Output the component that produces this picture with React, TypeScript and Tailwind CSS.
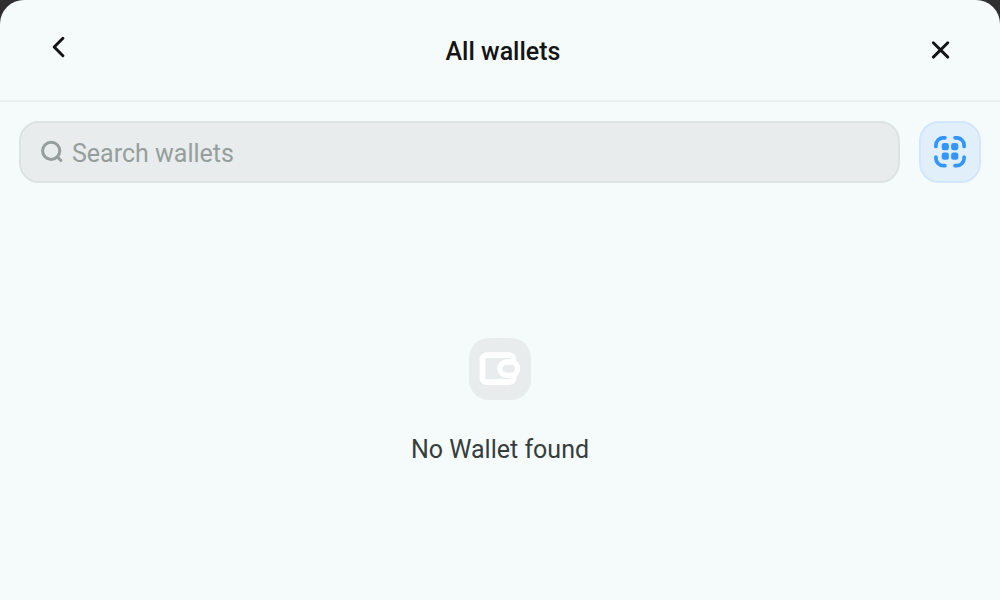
import React from "react";

function BackIcon() {
  return (
    <svg viewBox="0 0 24 24" className="size-6" fill="none" stroke="currentColor" strokeWidth="3" strokeLinecap="round" strokeLinejoin="round" aria-hidden="true">
      <path d="M16.9 3.3 8.2 12l8.7 8.7" />
    </svg>
  );
}

function CloseIcon() {
  return (
    <svg viewBox="0 0 24 24" className="size-6" fill="none" stroke="currentColor" strokeWidth="2.9" strokeLinecap="round" aria-hidden="true">
      <path d="M5.3 4.7 19.8 19.1M19.8 4.7 5.3 19.1" />
    </svg>
  );
}

function SearchIcon() {
  return (
    <svg viewBox="0 0 24 24" className="size-6 shrink-0" fill="none" stroke="currentColor" strokeWidth="3" strokeLinecap="round" aria-hidden="true">
      <circle cx="11.2" cy="10.8" r="8.6" />
      <path d="m17.4 17 3.5 3.5" />
    </svg>
  );
}

function ScanIcon() {
  return (
    <svg viewBox="0 0 32 32" className="size-8" aria-hidden="true">
      <g fill="none" stroke="currentColor" strokeWidth="3.7" strokeLinecap="round">
        <path d="M1.9 10.4V9.2a7.4 7.4 0 0 1 7.4-7.4h1.6" />
        <path d="M21.1 1.8h1.6a7.4 7.4 0 0 1 7.4 7.4v1.2" />
        <path d="M30.1 21.2v1.1a7.4 7.4 0 0 1-7.4 7.4h-1.6" />
        <path d="M10.9 29.7H9.3a7.4 7.4 0 0 1-7.4-7.4v-1.1" />
      </g>
      <g fill="currentColor">
        <rect x="7.7" y="7.1" width="7.2" height="7.2" rx="2.4" />
        <rect x="17.1" y="7.1" width="7.2" height="7.2" rx="2.4" />
        <rect x="7.7" y="16.6" width="7.2" height="7.2" rx="2.4" />
        <rect x="17.1" y="16.6" width="7.2" height="7.2" rx="2.4" />
      </g>
    </svg>
  );
}

function WalletIcon() {
  return (
    <svg viewBox="0 0 42 36" className="h-9 w-[42px]" fill="none" stroke="white" aria-hidden="true">
      <rect x="3.5" y="4.1" width="31" height="27" rx="4.2" strokeWidth="5.8" />
      <rect x="21" y="11" width="17.6" height="13.4" rx="6.7" fill="#e9eced" strokeWidth="5.4" />
    </svg>
  );
}

export default function App() {
  return (
    <div className="min-h-screen bg-[#302f30] font-[Roboto,sans-serif]">
      <main className="flex min-h-screen flex-col rounded-t-3xl bg-[#f5fbfb] text-[#141414]">
        <header className="grid h-[102px] grid-cols-[1fr_auto_1fr] items-center border-b-2 border-[#e9eeee] px-10">
          <button type="button" aria-label="Back" className="mb-1.5 justify-self-start p-1.5">
            <BackIcon />
          </button>
          <h1 className="pt-1 pl-1.5 text-[25px] leading-8 font-medium">All wallets</h1>
          <button type="button" aria-label="Close" className="justify-self-end p-2">
            <CloseIcon />
          </button>
        </header>
        <div className="flex gap-[19px] px-[19px] pt-[19px]">
          <label className="flex h-[62px] flex-1 items-center gap-2 rounded-[20px] border-2 border-[#dde2e2] bg-[#e9eced] px-[19px] text-[#949e9c]">
            <SearchIcon />
            <input
              type="text"
              aria-label="Search wallets"
              placeholder="Search wallets"
              className="min-w-0 flex-1 bg-transparent pt-1 text-[25px] leading-8 text-[#141414] outline-none placeholder:text-[#949e9c]"
            />
          </label>
          <button type="button" aria-label="Scan QR code" className="flex size-[62px] items-center justify-center rounded-[20px] border-2 border-[#d2e7fb] bg-[#e1effb] text-[#3396ff]">
            <ScanIcon />
          </button>
        </div>
        <section className="flex flex-col items-center gap-8 pt-[155px]">
          <div className="flex size-[62px] items-center justify-center rounded-[20px] bg-[#e9eced]">
            <WalletIcon />
          </div>
          <p className="text-[25px] leading-9 text-[#363d3d]">No Wallet found</p>
        </section>
      </main>
    </div>
  );
}
